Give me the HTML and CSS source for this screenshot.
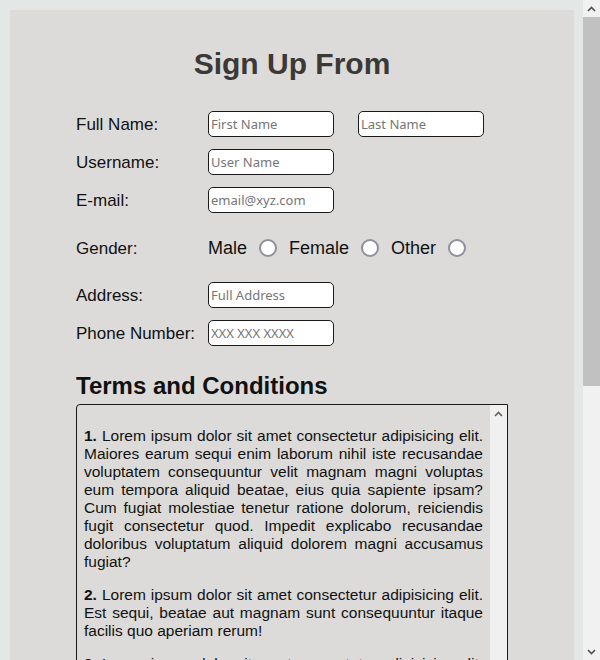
FILE: index.html
```html
<!DOCTYPE html>
<html lang="en">
<head>
<meta charset="utf-8">
<title>Sign Up From</title>
<link rel="stylesheet" href="styles.css">
</head>
<body>
<div class="container">
  <h1 class="title">Sign Up From</h1>
  <form class="form">
    <div class="row">
      <label class="label">Full Name:</label>
      <div class="fields">
        <input class="input" type="text" placeholder="First Name">
        <input class="input" type="text" placeholder="Last Name">
      </div>
    </div>
    <div class="row">
      <label class="label">Username:</label>
      <div class="fields"><input class="input" type="text" placeholder="User Name"></div>
    </div>
    <div class="row">
      <label class="label">E-mail:</label>
      <div class="fields"><input class="input" type="email" placeholder="email@xyz.com"></div>
    </div>
    <div class="row row-gender">
      <label class="label">Gender:</label>
      <div class="options">
        <span class="opt">Male</span><input class="radio" type="radio" name="g">
        <span class="opt">Female</span><input class="radio" type="radio" name="g">
        <span class="opt">Other</span><input class="radio" type="radio" name="g">
      </div>
    </div>
    <div class="row">
      <label class="label">Address:</label>
      <div class="fields"><input class="input" type="text" placeholder="Full Address"></div>
    </div>
    <div class="row">
      <label class="label">Phone Number:</label>
      <div class="fields"><input class="input" type="tel" placeholder="XXX XXX XXXX"></div>
    </div>
    <h2 class="terms-title">Terms and Conditions</h2>
    <div class="terms">
      <div class="terms-body">
        <p><b>1.</b> Lorem ipsum dolor sit amet consectetur adipisicing elit. Maiores earum sequi enim laborum nihil iste recusandae voluptatem consequuntur velit magnam magni voluptas eum tempora aliquid beatae, eius quia sapiente ipsam? Cum fugiat molestiae tenetur ratione dolorum, reiciendis fugit consectetur quod. Impedit explicabo recusandae doloribus voluptatum aliquid dolorem magni accusamus fugiat?</p>
        <p><b>2.</b> Lorem ipsum dolor sit amet consectetur adipisicing elit. Est sequi, beatae aut magnam sunt consequuntur itaque facilis quo aperiam rerum!</p>
        <p><b>3.</b> Lorem ipsum dolor sit amet consectetur adipisicing elit. Quibusdam, voluptates. Nostrum sint illo aspernatur eveniet, ipsum recusandae minima quas odit deleniti totam veniam sunt.</p>
        <p><b>4.</b> Lorem ipsum dolor sit amet consectetur adipisicing elit. Dolorem obcaecati quia repellendus nam, commodi iure voluptatibus ex fugiat doloribus tempore expedita atque.</p>
        <p><b>5.</b> Lorem ipsum dolor sit amet consectetur adipisicing elit. Natus, similique amet ad eius quidem cumque.</p>
      </div>
      <div class="vscroll">
        <span class="arrow"><svg width="9" height="6" viewBox="0 0 9 6"><polyline points="1,5 4.5,1.5 8,5" fill="none" stroke="#606060" stroke-width="1.6"/></svg></span>
        <span class="arrow"><svg width="9" height="6" viewBox="0 0 9 6"><polyline points="1,1 4.5,4.5 8,1" fill="none" stroke="#606060" stroke-width="1.6"/></svg></span>
      </div>
    </div>
  </form>
</div>
<div class="page-scroll">
  <span class="arrow"><svg width="9" height="6" viewBox="0 0 9 6"><polyline points="1,5 4.5,1.5 8,5" fill="none" stroke="#505050" stroke-width="1.6"/></svg></span>
  <span class="thumb"></span>
  <span class="track"></span>
  <span class="arrow"><svg width="9" height="6" viewBox="0 0 9 6"><polyline points="1,1 4.5,4.5 8,1" fill="none" stroke="#505050" stroke-width="1.6"/></svg></span>
</div>
</body>
</html>
```

FILE: styles.css
```css
html {
  background: #e3e7e6;
}
body {
  margin: 10px 26px 10px 10px;
  background: #e3e7e6;
  font-family: "Liberation Sans", Arial, sans-serif;
  color: #111;
}
.container {
  background: #dcdbd9;
  padding: 37px 66px 60px;
}
.title {
  margin: 0 0 30px;
  text-align: center;
  font-size: 30px;
  font-weight: bold;
  color: #3b3836;
}
.form {
  margin: 0;
}
.row {
  display: grid;
  grid-template-columns: 132px auto;
  align-items: center;
  height: 26px;
  margin-bottom: 12px;
}
.row-gender {
  height: 45px;
}
.label {
  font-size: 17px;
  line-height: 20px;
  padding-top: 2px;
  color: #111;
}
.fields {
  display: flex;
  gap: 24px;
}
.input {
  box-sizing: border-box;
  width: 126px;
  height: 26px;
  margin: 0;
  padding: 1px 2px;
  border: 1px solid #1a1a1a;
  border-radius: 5px;
  background: #fff;
  font-family: "Noto Sans", sans-serif;
  font-size: 13px;
  color: #111;
}
.input::placeholder {
  color: #767676;
}
.options {
  display: flex;
  align-items: center;
  padding-top: 1px;
}
.opt {
  font-size: 18px;
  margin-right: 12px;
}
.radio {
  appearance: none;
  -webkit-appearance: none;
  box-sizing: border-box;
  width: 18px;
  height: 18px;
  margin: 0 12px 0 0;
  border: 2px solid #8f8f9d;
  border-radius: 50%;
  background: #fff;
}
.terms-title {
  margin: 26px 0 4px;
  font-size: 24px;
  font-weight: bold;
  color: #111;
}
.terms {
  display: flex;
  border: 1px solid #1a1a1a;
  border-radius: 4px 0 0 0;
}
.terms-body {
  flex: 1;
  min-width: 0;
  padding: 7px;
}
.terms-body p {
  margin: 15px 0;
  font-size: 15.5px;
  text-align: justify;
  color: #111;
}
.vscroll {
  width: 17px;
  flex: none;
  background: #f0f0f0;
  display: flex;
  flex-direction: column;
  justify-content: space-between;
}
.arrow {
  display: flex;
  align-items: center;
  justify-content: center;
  width: 17px;
  height: 17px;
}
.page-scroll {
  position: fixed;
  top: 0;
  right: 0;
  width: 17px;
  height: 100vh;
  background: #f1f1f1;
  display: flex;
  flex-direction: column;
}
.page-scroll .thumb {
  height: 369px;
  background: #c1c1c1;
}
.page-scroll .track {
  flex: 1;
}
```
